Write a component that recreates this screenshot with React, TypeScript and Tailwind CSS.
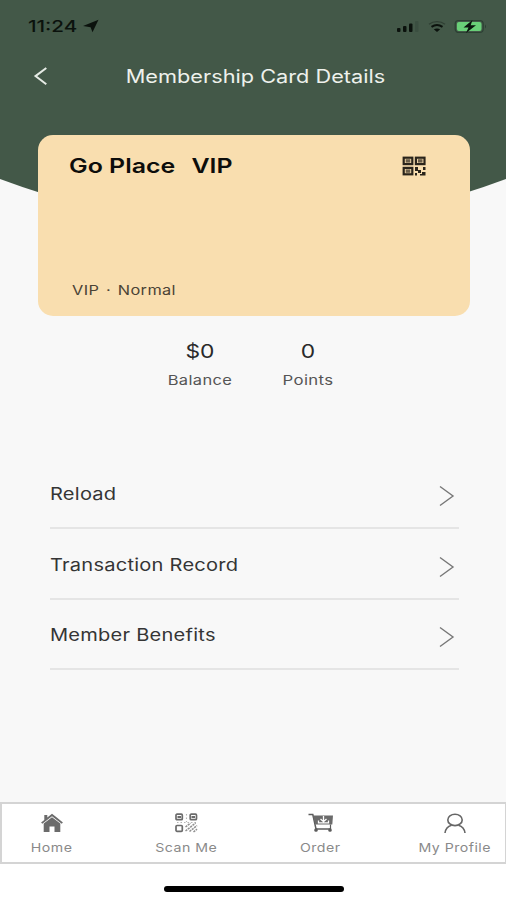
import React from "react";

const rows = ["Reload", "Transaction Record", "Member Benefits"];

function StatusBar() {
  return (
    <div className="flex h-[52px] items-center justify-between pl-[28px] pr-[19px] text-[#0b120d]">
      <div className="flex items-center">
        <span className="w-[49px] whitespace-nowrap">
          <span className="inline-block origin-left scale-x-[1.25] text-[16.5px] font-medium">11:24</span>
        </span>
        <svg className="ml-[5px]" width="18" height="14" viewBox="0 0 18 14" fill="currentColor">
          <path d="M16.500 .7 10.500 13.300 8.600 8.300 1 7Z" />
        </svg>
      </div>
      <div className="flex items-center">
        <svg className="mt-[1px]" width="24" height="13" viewBox="0 0 24 13" fill="currentColor">
          <rect x="2" y="8" width="3.500" height="4" rx="1" />
          <rect x="8" y="6" width="3.500" height="6" rx="1" />
          <rect x="14" y="3.500" width="3.500" height="8.500" rx="1" />
          <rect x="20" y="1" width="3.500" height="11" rx="1" opacity=".12" />
        </svg>
        <svg className="ml-[9px]" width="18" height="13" viewBox="0 0 18 13" fill="none" stroke="currentColor">
          <path d="M1 4.200C5.500 .8 12.500 .8 17 4.200" strokeWidth="1.300" opacity=".35" />
          <path d="M3.500 6.800C7 4.500 11 4.500 14.500 6.800" strokeWidth="2" />
          <path d="M9 12 5.800 9.300C7.500 8.200 10.500 8.200 12.200 9.300Z" fill="currentColor" stroke="none" />
        </svg>
        <svg className="ml-[8px]" width="33" height="15" viewBox="0 0 33 15">
          <rect x="1.200" y="1.500" width="28" height="12" rx="3.500" fill="none" stroke="#2c4033" strokeWidth="1.200" />
          <rect x="2.900" y="3" width="24.600" height="9" rx="2" fill="#69d078" />
          <path d="M31 5.500q2 2 0 4Z" fill="#2c4033" />
          <path d="M18.500 1 9.500 8.400h5L12 14l10-7.700h-5.300Z" fill="#0a150d" />
        </svg>
      </div>
    </div>
  );
}

function CardQr() {
  return (
    <svg width="24" height="20" viewBox="0 0 24 20" fill="none">
      <g stroke="#2a241b" strokeWidth="2.200">
        <rect x="1.700" y="1.700" width="8.600" height="6.400" />
        <rect x="13.900" y="1.700" width="8.600" height="6.400" />
        <rect x="1.700" y="11.900" width="8.600" height="6.400" />
      </g>
      <g fill="#6a5d49">
        <rect x="3.700" y="3.200" width="4.600" height="3.400" />
        <rect x="15.900" y="3.200" width="4.600" height="3.400" />
        <rect x="3.700" y="13.400" width="4.600" height="3.400" />
      </g>
      <path d="M13 11h3v3h3v3h-3v-2h-3ZM13 17h2v2.500h-2ZM21 11h2.500v3H21ZM20 16h3.500v3.500H18V18h2Z" fill="#2a241b" />
    </svg>
  );
}

function HomeIcon() {
  return (
    <svg width="24" height="20" viewBox="0 0 24 20" fill="#6b6b6b">
      <path d="M12 .8 16.500 4.300 22.900 9.400 21.700 10.800 12 3.200 2.300 10.800 1.100 9.400 4.300 7V2h3v2.500Z" />
      <path d="m12 4.200 8.300 6.400V19h-5.800v-5.500h-5V19H3.700v-8.400Z" />
    </svg>
  );
}

function ScanIcon() {
  return (
    <svg width="24" height="20" viewBox="0 0 24 20" fill="none" stroke="#6c6c6c">
      <g strokeWidth="1.700">
        <rect x="2" y="1.200" width="6.300" height="5.500" rx="1" />
        <rect x="16.200" y="1.200" width="6.300" height="5.500" rx="1" />
        <rect x="2" y="12.500" width="6.300" height="5.800" rx="1" />
      </g>
      <path d="M3.500 4h3.500M17.500 4H21" strokeWidth="2" />
      <path d="M3 9.500h20M12.500 1v8" strokeWidth="1.100" strokeDasharray="1.500 2" opacity=".5" />
      <path d="m11.500 14 5-4m-5 8 10-8M15.500 18.500l7.500-6M19.500 19l3.500-2.800" strokeWidth="1.600" strokeDasharray="2.200 .8" opacity=".75" />
    </svg>
  );
}

function CartIcon() {
  return (
    <svg width="28" height="20" viewBox="0 0 28 20" fill="none">
      <path d="M1.500 1.500h4.300L9 16h14.500" stroke="#5c5c5c" strokeWidth="1.500" />
      <path d="M6 2.500h20L25.300 11.500H8.300Z" fill="#6b6b6b" />
      <path d="M16.500 3v5.500m-3-2.500 3 2.700 3-2.700M11.500 7.500v2.300h10V7.500" stroke="#fff" strokeWidth="1.300" />
      <path d="M23.500 11.500v4.500" stroke="#5c5c5c" strokeWidth="1.200" />
      <rect x="7.300" y="15.300" width="3.400" height="3.400" rx="1.500" fill="#5c5c5c" />
      <rect x="21.300" y="15.300" width="3.400" height="3.400" rx="1.500" fill="#5c5c5c" />
    </svg>
  );
}

function ProfileIcon() {
  return (
    <svg width="24" height="21" viewBox="0 0 24 21" fill="none" stroke="#666" strokeWidth="1.600">
      <ellipse cx="12" cy="6.900" rx="7.200" ry="5.700" />
      <path d="M2 20C2.500 16 5 13.200 8.500 12.200M22 20c-.5-4-3-6.800-6.500-7.800" />
    </svg>
  );
}

const tabs = [
  { label: "Home", icon: <HomeIcon /> },
  { label: "Scan Me", icon: <ScanIcon /> },
  { label: "Order", icon: <CartIcon /> },
  { label: "My Profile", icon: <ProfileIcon /> },
];

export default function App() {
  return (
    <div className="relative flex h-[900px] w-[506px] flex-col overflow-hidden bg-white font-['Inter',sans-serif]">
      <div className="relative isolate flex h-[802px] flex-col overflow-hidden bg-[#f8f8f8]">
        <div className="absolute bottom-[577px] left-[-467px] -z-10 h-[1440px] w-[1440px] rounded-full bg-[#435848]" />
        <StatusBar />
        <header className="flex h-[48px] items-center justify-center">
          <svg className="absolute left-[33px]" width="15" height="20" viewBox="0 0 15 20" fill="none" stroke="#e6ebe5" strokeWidth="2">
            <path d="M13.300 2 2.500 10.100l10.800 8.200" />
          </svg>
          <h1 className="ml-[5px] mt-[2px] scale-x-[1.207] whitespace-nowrap text-[18px] leading-6 text-[#eef1ec]">Membership Card Details</h1>
        </header>
        <section className="ml-[37.5px] mt-[35px] flex h-[181px] w-[432.5px] flex-col justify-between rounded-[15px] bg-[#f9deaf] pb-[15px] pl-[31px] pr-[44.5px] pt-[19px]">
          <div className="flex items-start justify-between">
            <h2 className="flex origin-left scale-x-[1.245] gap-[13px] whitespace-nowrap text-[20px] font-semibold leading-6 text-[#0d0d0b]">
              <span>Go Place</span>
              <span>VIP</span>
            </h2>
            <div className="mt-[2px]"><CardQr /></div>
          </div>
          <div className="flex">
            <p className="ml-[3px] origin-left scale-x-[1.21] text-[13.5px] leading-[21px] tracking-[0.3px] text-[#4b4336] [word-spacing:1.5px]">VIP · Normal</p>
          </div>
        </section>
        <section className="ml-[2px] mt-[23px] flex justify-center text-center text-[#555]">
          <div className="w-[108px]">
            <div className="mt-px scale-x-[1.2] text-[19px] leading-6 text-[#2a2a2a]">$0</div>
            <div className="mt-[6px] scale-x-[1.22] text-[13.5px] leading-5 tracking-[0.3px]">Balance</div>
          </div>
          <div className="w-[108px]">
            <div className="mt-px scale-x-[1.2] text-[19px] leading-6 text-[#2a2a2a]">0</div>
            <div className="mt-[6px] scale-x-[1.24] text-[13.5px] leading-5 tracking-[0.3px]">Points</div>
          </div>
        </section>
        <section className="ml-[50px] mt-[69px] w-[409px]">
          {rows.map((row) => (
            <div key={row} className="flex h-[70.400px] items-center justify-between border-b-2 border-[#e5e5e5] pr-[4px]">
              <span className="mt-[2px] origin-left scale-x-[1.18] text-[17px] leading-6 tracking-[0.2px] text-[#353535]">{row}</span>
              <svg className="mt-[6px]" width="17" height="22" viewBox="0 0 17 22" fill="none" stroke="#777" strokeWidth="1.400">
                <path d="m2 1.500 13 9.500L2 20.500" />
              </svg>
            </div>
          ))}
        </section>
      </div>
      <nav className="flex h-[62px] justify-between border-2 border-r border-[#d4d4d4]">
        {tabs.map((tab) => (
          <div key={tab.label} className="flex w-[100px] flex-col items-center pt-[9px] text-[#8a8a8a]">
            <div className="flex h-[21px] items-start">{tab.icon}</div>
            <span className="mt-[4px] scale-x-[1.18] whitespace-nowrap text-[12px] leading-5 tracking-[0.4px]">{tab.label}</span>
          </div>
        ))}
      </nav>
      <div className="ml-[163.5px] mt-[22px] h-[6px] w-[180.5px] rounded-full bg-black" />
    </div>
  );
}
